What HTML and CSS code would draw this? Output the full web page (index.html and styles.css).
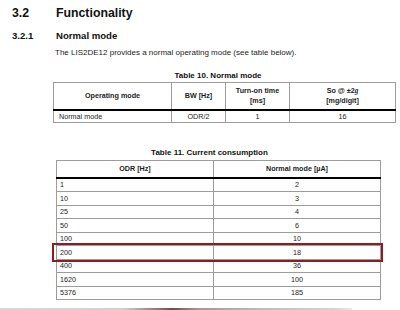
FILE: index.html
```html
<!DOCTYPE html>
<html>
<head>
<meta charset="utf-8">
<link rel="stylesheet" href="styles.css">
</head>
<body>
<div class="page">
  <h1 class="h1"><span class="num">3.2</span><span>Functionality</span></h1>
  <h2 class="h2"><span class="num">3.2.1</span><span>Normal mode</span></h2>
  <p class="para">The LIS2DE12 provides a normal operating mode (see table below).</p>

  <div class="block t10">
    <div class="caption">Table 10. Normal mode</div>
    <table class="tbl">
      <colgroup><col class="c1"><col class="c2"><col class="c3"><col class="c4"></colgroup>
      <thead>
        <tr><th>Operating mode</th><th>BW [Hz]</th><th>Turn-on time<br>[ms]</th><th>So @ ±2<i class="g">g</i><br>[mg/digit]</th></tr>
      </thead>
      <tbody>
        <tr><td class="l">Normal mode</td><td>ODR/2</td><td>1</td><td>16</td></tr>
      </tbody>
    </table>
  </div>

  <div class="block t11">
    <div class="caption">Table 11. Current consumption</div>
    <div class="wrap">
      <table class="tbl">
        <colgroup><col class="d1"><col class="d2"></colgroup>
        <thead>
          <tr><th>ODR [Hz]</th><th>Normal mode [µA]</th></tr>
        </thead>
        <tbody>
          <tr><td class="l">1</td><td>2</td></tr>
          <tr><td class="l">10</td><td>3</td></tr>
          <tr><td class="l">25</td><td>4</td></tr>
          <tr><td class="l">50</td><td>6</td></tr>
          <tr><td class="l">100</td><td>10</td></tr>
          <tr><td class="l">200</td><td>18</td></tr>
          <tr><td class="l">400</td><td>36</td></tr>
          <tr><td class="l">1620</td><td>100</td></tr>
          <tr><td class="l">5376</td><td>185</td></tr>
        </tbody>
      </table>
      <div class="highlight"></div>
    </div>
  </div>

  <div class="shade"></div>
</div>
</body>
</html>
```

FILE: styles.css
```css
html, body {
  margin: 0;
  padding: 0;
  background: #ffffff;
}
body {
  width: 400px;
  height: 310px;
  overflow: hidden;
  font-family: "Liberation Sans", Arial, sans-serif;
  color: #1c1c1c;
}
.page {
  padding: 5.5px 0 0 12px;
}
.h1, .h2 {
  margin: 0;
  display: flex;
  font-weight: bold;
  color: #111;
}
.h1 {
  font-size: 12.3px;
  line-height: 15px;
}
.h2 {
  margin-top: 9.5px;
  font-size: 9.6px;
  line-height: 12px;
}
.num {
  width: 44px;
  flex: none;
}
.para {
  margin: 5.7px 0 0 43px;
  font-size: 8px;
  line-height: 10px;
}
.caption {
  font-size: 8px;
  line-height: 10px;
  font-weight: bold;
  text-align: center;
  color: #111;
}
.t10 {
  margin: 13.5px 0 0 41px;
  width: 342px;
}
.t10 .caption {
  padding-right: 12px;
  margin-bottom: 0.8px;
}
.t11 {
  margin: 25px 0 0 44px;
  width: 324px;
}
.t11 .caption {
  padding-right: 17px;
  margin-bottom: 2px;
}
.tbl {
  width: 100%;
  border-collapse: collapse;
  table-layout: fixed;
  font-size: 7.2px;
  line-height: 9.5px;
}
.tbl th, .tbl td {
  border: 1px solid #9c9c9c;
  padding: 0 3px;
  text-align: center;
  vertical-align: middle;
  color: #1c1c1c;
}
.tbl th {
  font-weight: bold;
  border-bottom: 2px solid #000;
}
.tbl td.l {
  text-align: left;
}
.g {
  font-family: "Liberation Serif", "Times New Roman", serif;
}
.c1 { width: 118px; }
.c2 { width: 54px; }
.c3 { width: 64px; }
.c4 { width: 106px; }
.d1 { width: 157px; }
.d2 { width: 167px; }

.t10 th { height: 26px; }
.t10 td { height: 11px; padding-left: 5px; }
.t10 td + td { padding-left: 3px; }

.t11 th { height: 16px; }
.t11 td { height: 12.5px; }

.wrap {
  position: relative;
}
.highlight {
  position: absolute;
  left: -4px;
  top: 83.5px;
  width: 327px;
  height: 14.5px;
  border: 2px solid #8e1c24;
}
.shade {
  margin: 8px 0 0 -12px;
  width: 352px;
  height: 4px;
  background: linear-gradient(to right, #d6d8de 0%, #cfcfd4 35%, #8a6a62 46%, #6e4c44 49%, #a89690 56%, #bdbdbd 75%, #d4d4d4 95%, #e8e8e8 100%);
}
```
